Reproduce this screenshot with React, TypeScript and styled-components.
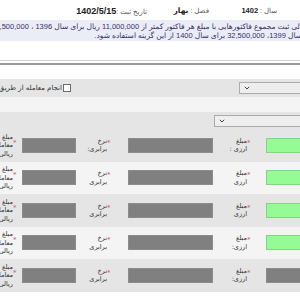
import React from "react";
import styled, { createGlobalStyle } from "styled-components";

const GlobalStyle = createGlobalStyle`
  html, body {
    margin: 0;
    padding: 0;
    background: #ffffff;
  }
  body {
    font-family: "Liberation Sans", "DejaVu Sans", sans-serif;
  }
`;

type Tone = "dark" | "light";

interface AmountRow {
  currencyLabel: string;
  rateLabel: string;
  rialLabel: string;
  tone: Tone;
  currencyGreen: boolean;
}

const rows: AmountRow[] = [
  { currencyLabel: "ارزی :", rateLabel: "برابری:", rialLabel: "ریالی", tone: "dark", currencyGreen: true },
  { currencyLabel: "ارزی", rateLabel: "برابری", rialLabel: "ریالی", tone: "light", currencyGreen: true },
  { currencyLabel: "ارزی", rateLabel: "برابری", rialLabel: "ریالی", tone: "dark", currencyGreen: true },
  { currencyLabel: "ارزی:", rateLabel: "برابری", rialLabel: "ریالی", tone: "light", currencyGreen: true },
  { currencyLabel: "ارزی:", rateLabel: "برابری", rialLabel: "ریالی", tone: "dark", currencyGreen: false },
];

function DropDown({ width }: { width: number }) {
  return (
    <Select $width={width}>
      <svg width="6" height="4" viewBox="0 0 6 4">
        <path d="M0.8 0.8 L3 3 L5.2 0.8" fill="none" stroke="#444" strokeWidth="1" />
      </svg>
    </Select>
  );
}

function App() {
  return (
    <Page>
      <GlobalStyle />
      <Header>
        <HeaderItem $width={30}>
          سال : <strong>1402</strong>
        </HeaderItem>
        <HeaderItem $width={30}>
          فصل : <strong>بهار</strong>
        </HeaderItem>
        <HeaderItem $width={70}>
          تاریخ ثبت :<DateValue>1402/5/15</DateValue>
        </HeaderItem>
      </Header>

      <Notice>
        <NoticeLine>
          الی ثبت مجموع فاکتورهایی با مبلغ هر فاکتور کمتر از 11,000,000 ریال برای سال 1396 ، 12,500,000 ریال برای سال 1397 ، 14,000,000 ریال
        </NoticeLine>
        <NoticeLine>سال 1399، 32,500,000 برای سال 1400 از این گزینه استفاده شود.</NoticeLine>
      </Notice>

      <Divider />

      <OptionBand $tone="dark" $height={18}>
        <SelectCell $width={61}>
          <DropDown width={67} />
        </SelectCell>
        <CheckCell>
          <CheckBox />
          <CheckLabel>انجام معامله از طریق نماینده / حق العمل کار</CheckLabel>
        </CheckCell>
      </OptionBand>
      <OptionBand $tone="light" $height={15} />
      <OptionBand $tone="dark" $height={17}>
        <SelectCell $width={86}>
          <DropDown width={92} />
        </SelectCell>
      </OptionBand>

      {rows.map((row, i) => (
        <Row key={i} $tone={row.tone}>
          <Field $width={40} $green={row.currencyGreen} />
          <Star>*</Star>
          <Label>
            مبلغ
            <br />
            {row.currencyLabel}
          </Label>
          <Field $width={85} />
          <Star>*</Star>
          <Label>
            نرخ
            <br />
            {row.rateLabel}
          </Label>
          <Field $width={54} />
          <Star>*</Star>
          <Label>
            مبلغ
            <br />
            معامله
            <br />
            {row.rialLabel}
          </Label>
        </Row>
      ))}
    </Page>
  );
}

export default App;

const Page = styled.div`
  width: 300px;
  height: 300px;
  overflow: hidden;
  direction: rtl;
  background: #ffffff;
`;

const Header = styled.div`
  height: 20px;
  display: flex;
  align-items: center;
  padding: 1px 23px 0 0;
  box-sizing: border-box;
  font-size: 7px;
  color: #555555;
  white-space: nowrap;
`;

const HeaderItem = styled.div<{ $width: number }>`
  width: ${({ $width }) => $width}px;
  margin-left: 38px;
  &:nth-child(2) {
    margin-left: 32px;
  }
  strong {
    color: #222222;
    font-size: 7.5px;
  }
`;

const DateValue = styled.span`
  font-weight: 700;
  font-size: 9px;
  color: #222222;
`;

const Notice = styled.div`
  height: 21px;
  box-sizing: border-box;
  padding-top: 2px;
  background: #ececf7;
  color: #333366;
  font-size: 7.5px;
  line-height: 9px;
  overflow: hidden;
`;

const NoticeLine = styled.div`
  white-space: nowrap;
  margin-right: -2px;
`;

const Divider = styled.div`
  height: 2px;
  margin: 19px 0 14px;
  border-top: 1px solid #d2d2d2;
  border-bottom: 2px solid #9a9a9a;
`;

const OptionBand = styled.div<{ $tone: Tone; $height: number }>`
  height: ${({ $height }) => $height}px;
  background: ${({ $tone }) => ($tone === "dark" ? "#e5e5e5" : "#f4f4f4")};
  display: flex;
  align-items: center;
`;

const SelectCell = styled.div<{ $width: number }>`
  flex: none;
  width: ${({ $width }) => $width}px;
  height: 12px;
  display: flex;
  align-items: center;
`;

const Select = styled.div<{ $width: number }>`
  position: relative;
  z-index: 1;
  flex: none;
  width: ${({ $width }) => $width}px;
  height: 12px;
  margin-right: -6px;
  box-sizing: border-box;
  border: 1px solid #aaaaaa;
  background: #eeeeee;
  display: flex;
  align-items: center;
  justify-content: flex-end;
  padding-left: 4px;
`;

const CheckCell = styled.div`
  flex: none;
  width: 71px;
  margin-right: 168px;
  display: flex;
  align-items: center;
  white-space: nowrap;
  overflow: hidden;
`;

const CheckBox = styled.span`
  flex: none;
  width: 8px;
  height: 8px;
  box-sizing: border-box;
  border: 1px solid #6b6b6b;
  background: #ffffff;
  margin-left: 1px;
`;

const CheckLabel = styled.span`
  font-family: "DejaVu Sans", sans-serif;
  font-size: 7px;
  color: #333333;
`;

const Row = styled.div<{ $tone: Tone }>`
  height: 32.5px;
  background: ${({ $tone }) => ($tone === "dark" ? "#e5e5e5" : "#f4f4f4")};
  display: grid;
  grid-template-columns: 40px 19px 25px 94px 21px 21px 64px 9px 40px;
  align-items: center;
  margin-right: -6px;
`;

const Field = styled.div<{ $width: number; $green?: boolean }>`
  width: ${({ $width }) => $width}px;
  height: 15px;
  box-sizing: border-box;
  justify-self: end;
  border: 1px solid ${({ $green }) => ($green ? "#7fd87f" : "#8c8c8c")};
  background: ${({ $green }) => ($green ? "#95fb95" : "#808080")};
`;

const Star = styled.span`
  justify-self: end;
  color: #e0506a;
  font-family: "DejaVu Sans", sans-serif;
  font-size: 7px;
  line-height: 7px;
  margin-top: -4px;
`;

const Label = styled.div`
  font-family: "DejaVu Sans", sans-serif;
  font-size: 6.5px;
  line-height: 8.5px;
  color: #333333;
  white-space: nowrap;
  text-align: right;
`;
